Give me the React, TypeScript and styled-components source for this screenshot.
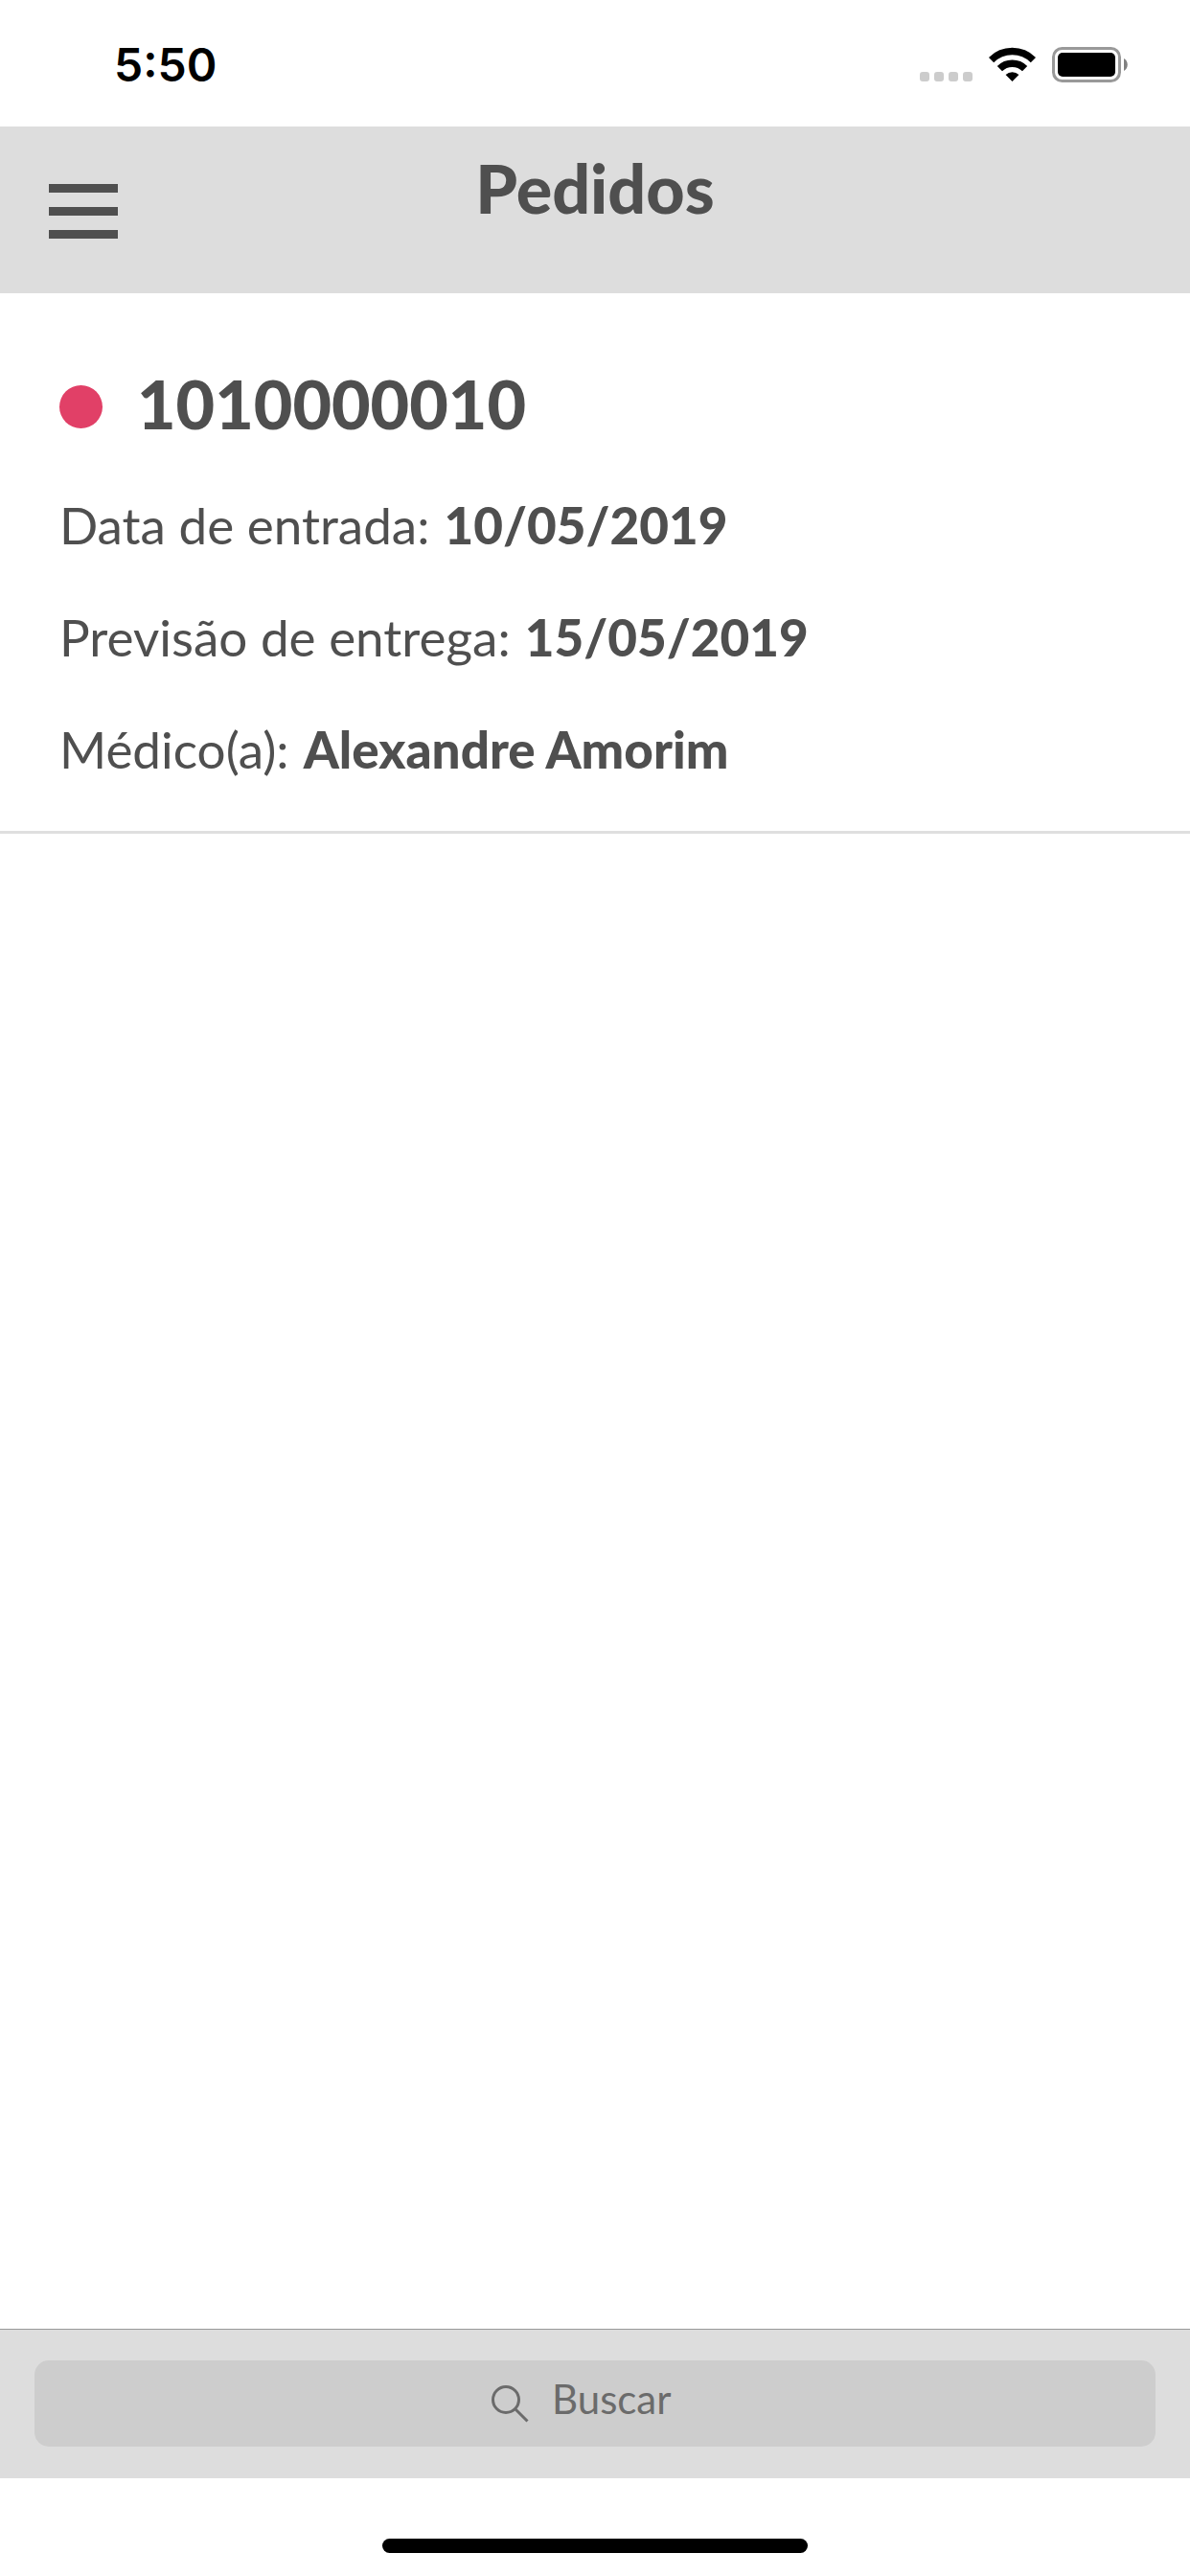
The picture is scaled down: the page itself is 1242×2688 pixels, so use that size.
import React from "react";
import styled, { createGlobalStyle } from "styled-components";

const ink = "#4f4f4f";
const bar = "#dddddd";

const GlobalStyle = createGlobalStyle`
  *, *::before, *::after { box-sizing: border-box; }
  body {
    margin: 0;
    background: #ffffff;
    color: ${ink};
    font-family: Lato, "Open Sans", sans-serif;
  }
`;

const Screen = styled.div`
  min-height: 100vh;
  display: flex;
  flex-direction: column;
`;

const StatusBar = styled.div`
  height: 132px;
  padding: 0 65px 0 119px;
  display: flex;
  align-items: center;
  justify-content: space-between;
  color: #000000;
`;

const Clock = styled.time`
  padding-top: 4px;
  font: 600 48px/58px Inter, "Liberation Sans", sans-serif;
`;

const StatusIcons = styled.div`
  padding-top: 3px;
  display: flex;
  align-items: flex-end;
  gap: 17px;

  svg { display: block; }
`;

const Header = styled.header`
  display: grid;
  grid-template-columns: 1fr auto 1fr;
  align-items: start;
  background: ${bar};
`;

const MenuButton = styled.button`
  justify-self: start;
  padding: 60px 51px 57px;
  border: 0;
  background: none;
  color: inherit;
  cursor: pointer;

  svg { display: block; }
`;

const Title = styled.h1`
  margin: 0;
  padding-top: 24px;
  font-size: 70px;
  line-height: 80px;
  font-weight: 900;
`;

const OrderList = styled.ul`
  flex: 1;
  margin: 0;
  padding: 0;
  list-style: none;
`;

const Order = styled.li`
  padding: 75px 62px 55px;
  display: flex;
  flex-direction: column;
  gap: 57px;
  border-bottom: 3px solid #dfdfdf;
`;

const OrderHeading = styled.div`
  display: flex;
  align-items: center;
  gap: 36px;
`;

const StatusDot = styled.span<{ $color: string }>`
  width: 45px;
  height: 45px;
  margin-top: 7px;
  border-radius: 50%;
  background: ${(p) => p.$color};
`;

const OrderNumber = styled.h2`
  margin: 0;
  font-size: 70px;
  line-height: 80px;
  font-weight: 900;
`;

const Details = styled.dl`
  margin: 0;
  display: flex;
  flex-direction: column;
  gap: 57px;
`;

const Detail = styled.div`
  display: flex;
  gap: 15px;
  font-size: 53px;
  line-height: 60px;
`;

const Label = styled.dt`
  font-weight: 400;
`;

const Value = styled.dd`
  margin: 0;
  font-weight: 900;
`;

const SearchBar = styled.form`
  padding: 32px 36px 33px;
  border-top: 1px solid #999999;
  background: ${bar};
`;

const SearchField = styled.label`
  height: 90px;
  display: flex;
  align-items: center;
  justify-content: center;
  gap: 24px;
  border-radius: 15px;
  background: #cdcdcd;
  color: #6b6b6b;
`;

const SearchInput = styled.input`
  width: 153px;
  height: 50px;
  margin-bottom: 10px;
  padding: 0;
  border: 0;
  outline: 0;
  background: none;
  color: inherit;
  font: 400 42px/50px Lato, "Open Sans", sans-serif;

  &::placeholder { color: inherit; opacity: 1; }
`;

const HomeArea = styled.footer`
  padding: 63px 0 24px;
  display: flex;
  justify-content: center;
`;

const HomeIndicator = styled.span`
  width: 444px;
  height: 15px;
  border-radius: 8px;
  background: #000000;
`;

const SignalIcon = () => (
  <svg width="55" height="11" viewBox="0 0 55 11" fill="#cccccc" aria-hidden="true">
    {[0, 15, 30, 45].map((x) => (
      <rect key={x} x={x} y="0" width="10" height="10" rx="3" />
    ))}
  </svg>
);

const WifiIcon = () => (
  <svg width="49" height="37" viewBox="0 0 49 37" aria-hidden="true">
    <g fill="none" stroke="#000000">
      <path d="M2.6 13.6 A31 31 0 0 1 46.4 13.6" strokeWidth="7.4" />
      <path d="M11.4 22.6 A18.6 18.6 0 0 1 37.6 22.6" strokeWidth="7.4" />
    </g>
    <path d="M24.5 36 L17.6 29 A10 10 0 0 1 31.4 29 Z" fill="#000000" />
  </svg>
);

const BatteryIcon = () => (
  <svg width="79" height="37" viewBox="0 0 79 37" aria-hidden="true">
    <rect x="1.5" y="1.5" width="69" height="34" rx="9" fill="none" stroke="#999999" strokeWidth="3" />
    <rect x="6" y="6" width="60" height="25" rx="5" fill="#000000" />
    <path d="M75 12 C80 14.5 80 22.5 75 25 Z" fill="#808080" />
  </svg>
);

const MenuIcon = () => (
  <svg width="72" height="57" viewBox="0 0 72 57" fill="currentColor" aria-hidden="true">
    <path d="M0 0H72V9H0ZM0 24H72V33H0ZM0 48H72V57H0Z" />
  </svg>
);

const SearchIcon = () => (
  <svg width="39" height="39" viewBox="0 0 39 39" fill="none" stroke="currentColor" strokeWidth="3" aria-hidden="true">
    <circle cx="15" cy="15" r="13.5" />
    <path d="M24.5 24.5 L37.5 37.5" />
  </svg>
);

const orders = [
  {
    number: "1010000010",
    color: "#e14067",
    details: [
      { label: "Data de entrada:", value: "10/05/2019" },
      { label: "Previsão de entrega:", value: "15/05/2019" },
      { label: "Médico(a):", value: "Alexandre Amorim" },
    ],
  },
];

export default function App() {
  return (
    <Screen>
      <GlobalStyle />
      <StatusBar>
        <Clock>5:50</Clock>
        <StatusIcons>
          <SignalIcon />
          <WifiIcon />
          <BatteryIcon />
        </StatusIcons>
      </StatusBar>
      <Header>
        <MenuButton type="button" aria-label="Menu">
          <MenuIcon />
        </MenuButton>
        <Title>Pedidos</Title>
      </Header>
      <OrderList>
        {orders.map((order) => (
          <Order key={order.number}>
            <OrderHeading>
              <StatusDot $color={order.color} />
              <OrderNumber>{order.number}</OrderNumber>
            </OrderHeading>
            <Details>
              {order.details.map((d) => (
                <Detail key={d.label}>
                  <Label>{d.label}</Label>
                  <Value>{d.value}</Value>
                </Detail>
              ))}
            </Details>
          </Order>
        ))}
      </OrderList>
      <SearchBar role="search">
        <SearchField>
          <SearchIcon />
          <SearchInput type="text" placeholder="Buscar" aria-label="Buscar" />
        </SearchField>
      </SearchBar>
      <HomeArea>
        <HomeIndicator />
      </HomeArea>
    </Screen>
  );
}
